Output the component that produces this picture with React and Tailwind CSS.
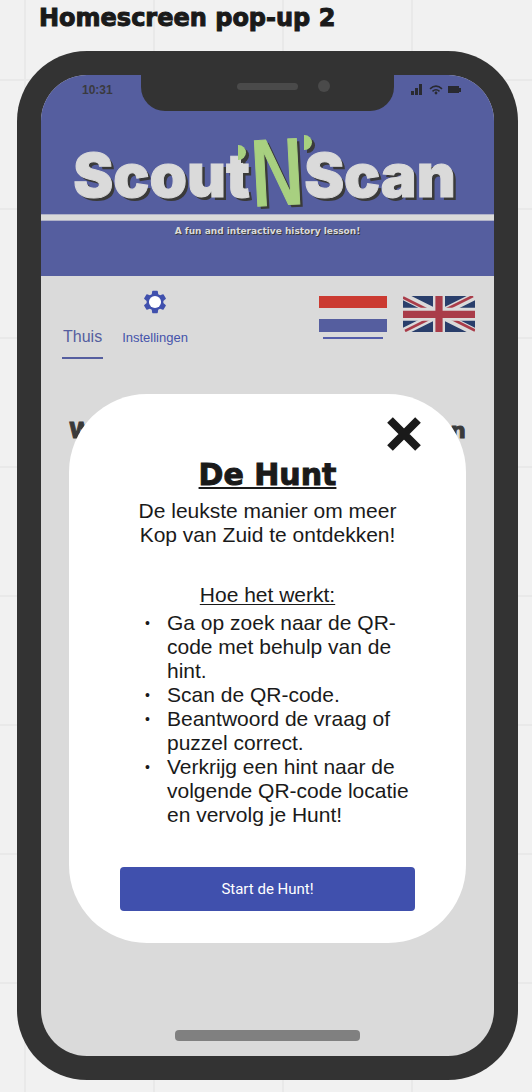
import React from "react";

function StatusIcons() {
  return (
    <svg viewBox="0 0 50 12" className="h-3 w-[50px] text-[#292a31]" fill="currentColor" aria-hidden="true">
      <path d="M0 7h3v4H0zM4 4h3v7H4zM8 0h3v11H8z" />
      <g fill="none" stroke="currentColor" strokeWidth="1.6">
        <path d="M19 4.8Q25 -.6 31 4.8" />
        <path d="M21.5 7.3Q25 4.2 28.500 7.3" />
      </g>
      <circle cx="25" cy="9" r="1.400" />
      <path d="M37 2h11v2h2v4h-2v1H37z" />
    </svg>
  );
}

function Notch() {
  return (
    <div className="flex h-9 items-start justify-center rounded-b-[24px] bg-[#333]">
      <span className="mt-2 ml-8 h-[7px] w-[61px] rounded-full bg-[#4a4a4a]" />
      <span className="mt-[5px] ml-5 size-3 rounded-full bg-[#4a4a4a]" />
    </div>
  );
}

function Logo() {
  return (
    <h1 className="flex h-[103px] items-end justify-center pr-1.5 font-['Inter',sans-serif] text-[60px] leading-[60px] font-black text-[#dadada] [text-shadow:3px_3px_0_#3a3a3a]">
      <span className="mb-[9px] [-webkit-text-stroke:1px_#dadada]">Scout</span>
      <span className="relative z-10 mb-[5px] text-[#a8d080]">
        <span className="block -rotate-3 font-['DejaVu_Sans_Mono',monospace] text-[90px] leading-[70px] font-normal [-webkit-text-stroke:1px_#a8d080]">
          N
        </span>
        <span className="absolute top-1.5 -left-3 h-[15px] w-2 rounded-r-full bg-[#a8d080] shadow-[3px_3px_0_#3a3a3a]" />
        <span className="absolute -top-1 -right-2 h-[15px] w-2 rounded-r-full bg-[#a8d080] shadow-[3px_3px_0_#3a3a3a]" />
      </span>
      <span className="mb-[9px] [-webkit-text-stroke:1px_#dadada]">Scan</span>
    </h1>
  );
}

function DutchFlag() {
  return (
    <svg viewBox="0 0 68 36" className="h-9 w-[68px]" role="img" aria-label="Nederlands">
      <path fill="#cb3a31" d="M0 0h68v12H0z" />
      <path fill="#555e9f" d="M0 23h68v13H0z" />
    </svg>
  );
}

function BritishFlag() {
  return (
    <svg viewBox="0 0 72 36" className="h-9 w-[72px]" role="img" aria-label="English">
      <path fill="#293e6b" d="M0 0h72v36H0z" />
      <path stroke="#dadada" strokeWidth="7.500" d="M0 0l72 36M72 0L0 36" />
      <path stroke="#a93c49" strokeWidth="2.600" d="M0 1.500L30 16.500M42 19.500L72 34.500M70 0L40 15M32 20L2 35" />
      <path stroke="#dadada" strokeWidth="12" d="M36 0v36" />
      <path stroke="#dadada" strokeWidth="13" d="M0 18.300h72" />
      <path stroke="#a93c49" strokeWidth="7.200" d="M36 0v36M0 18.300h72" />
    </svg>
  );
}

function Nav() {
  return (
    <nav className="flex items-start justify-between pr-[19px] pl-[21px]">
      <div className="flex text-[#4553ab]">
        <a href="#thuis" className="mt-[51px] border-b-2 border-[#555e9f] px-px pb-[10px] text-base leading-5 text-[#555e9f]">
          Thuis
        </a>
        <a href="#instellingen" className="mt-3 ml-[19px] flex flex-col items-center text-[13px] leading-5">
          <svg viewBox="0 0 24 24" className="mb-3 size-7" aria-hidden="true">
            <path
              fill="#4050ad"
              d="M19.140 12.940c.040-.3.060-.610.060-.940s-.020-.640-.070-.940l2.030-1.580a.49.49 0 0 0 .120-.610l-1.920-3.320a.488.488 0 0 0-.590-.220l-2.390.960a7.020 7.020 0 0 0-1.620-.940l-.360-2.540A.484.484 0 0 0 13.920 2.400h-3.840a.484.484 0 0 0-.480.410l-.360 2.540c-.590.240-1.130.570-1.620.940l-2.390-.960a.488.488 0 0 0-.590.220L2.720 8.870a.49.49 0 0 0 .120.610l2.030 1.580c-.050.300-.090.630-.090.940s.020.640.070.940l-2.030 1.580a.49.49 0 0 0-.120.610l1.920 3.320c.120.220.370.290.590.220l2.390-.960c.500.380 1.030.700 1.620.940l.360 2.540c.050.240.240.410.480.410h3.840c.240 0 .440-.170.470-.410l.360-2.540a6.900 6.900 0 0 0 1.620-.940l2.390.960c.220.080.470 0 .590-.220l1.920-3.320a.49.49 0 0 0-.120-.610z"
            />
            <circle cx="12" cy="12" r="5.200" fill="#fff" />
          </svg>
          Instellingen
        </a>
      </div>
      <div className="mt-5 flex gap-4">
        <button type="button" className="flex flex-col items-center gap-[5px]">
          <DutchFlag />
          <span className="h-0.5 w-[60px] bg-[#555eaa]" />
        </button>
        <button type="button" className="flex items-start">
          <BritishFlag />
        </button>
      </div>
    </nav>
  );
}

const steps = [
  "Ga op zoek naar de QR-code met behulp van de hint.",
  "Scan de QR-code.",
  "Beantwoord de vraag of puzzel correct.",
  "Verkrijg een hint naar de volgende QR-code locatie en vervolg je Hunt!",
];

function HuntDialog() {
  return (
    <section
      role="dialog"
      aria-labelledby="hunt-title"
      className="absolute inset-x-7 top-[319px] z-20 flex flex-col items-center rounded-[78px] bg-white px-[51px] pt-[23px] pb-8 text-[21px] leading-6 text-[#1a1a1a]"
    >
      <button type="button" aria-label="Sluiten" className="-mr-1.5 self-end">
        <svg viewBox="0 0 34 34" className="size-[34px]" stroke="#1a1a1a" strokeWidth="8" aria-hidden="true">
          <path d="M3 3l28 28M31 3L3 31" />
        </svg>
      </button>
      <h2
        id="hunt-title"
        className="mt-1.5 font-['DejaVu_Sans',sans-serif] text-[30px] leading-9 font-bold underline decoration-2 underline-offset-2 [-webkit-text-stroke:1px_#1a1a1a]"
      >
        De Hunt
      </h2>
      <p className="mt-1.5 w-[264px] text-center">De leukste manier om meer Kop van Zuid te ontdekken!</p>
      <h3 className="mt-9 underline decoration-1 underline-offset-2">Hoe het werkt:</h3>
      <ul className="mt-1 w-full pl-[25px]">
        {steps.map((step) => (
          <li key={step} className="flex">
            <span className="w-[22px] shrink-0 text-sm leading-6" aria-hidden="true">
              •
            </span>
            <span>{step}</span>
          </li>
        ))}
      </ul>
      <button type="button" className="mt-10 h-11 w-full rounded bg-[#4050ad] font-['Roboto',sans-serif] text-[15px] text-white">
        Start de Hunt!
      </button>
    </section>
  );
}

export default function App() {
  return (
    <div className="min-h-screen bg-[#f1f1f1] bg-[linear-gradient(to_right,#e9e9e9_2px,transparent_2px),linear-gradient(to_bottom,#e9e9e9_2px,transparent_2px)] bg-[size:129px_129px] bg-[position:24px_79px] pr-[14px] pb-3 pl-[17px] font-['Liberation_Sans',Arial,sans-serif]">
      <p className="pt-1 pb-[19px] pl-[22px] font-['DejaVu_Sans',sans-serif] text-2xl leading-7 font-bold text-[#1a1a1a] [-webkit-text-stroke:1px_#1a1a1a]">
        Homescreen pop-up 2
      </p>
      <div className="rounded-[70px] bg-[#333] p-6">
        <main className="relative flex min-h-[981px] flex-col overflow-hidden rounded-[46px] bg-[#dadada]">
          <header className="h-[201px] bg-[#555e9f]">
            <div className="grid h-9 grid-cols-[1fr_253px_1fr]">
              <time className="pt-[5px] pl-[41px] text-xs leading-5 font-bold text-[#3a3a40]">10:31</time>
              <Notch />
              <div className="pt-[9px] pl-[17px]">
                <StatusIcons />
              </div>
            </div>
            <Logo />
            <div className="h-[7px] border-y border-[#b0b2c8] bg-[#dadada]" />
            <p className="pt-1 text-center font-['DejaVu_Sans',sans-serif] text-[9px] leading-3 font-bold text-[#dadada] [text-shadow:1px_1px_0_#3a3a3a]">
              A fun and interactive history lesson!
            </p>
          </header>
          <Nav />
          <div className="mt-[58px] flex justify-between px-7 font-['DejaVu_Sans',sans-serif] text-[22px] leading-7 font-bold text-[#3a3a3a] [-webkit-text-stroke:1px_#3a3a3a]">
            <span>W</span>
            <span>n</span>
          </div>
          <HuntDialog />
          <div className="mx-auto mt-auto mb-[15px] h-[11px] w-[185px] rounded-sm bg-[#808080]" />
        </main>
      </div>
    </div>
  );
}
